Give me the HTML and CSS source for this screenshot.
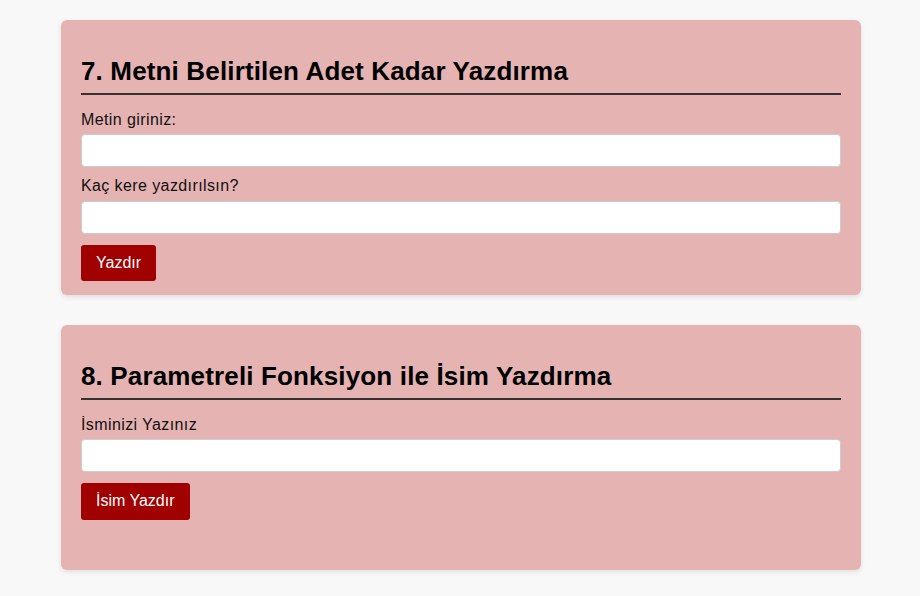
FILE: index.html
```html
<!DOCTYPE html>
<html lang="tr">
<head>
<meta charset="utf-8">
<title>JavaScript Alıştırmaları</title>
<link rel="stylesheet" href="styles.css">
</head>
<body>
<main class="page">
  <section class="card">
    <h2 class="card-title">7. Metni Belirtilen Adet Kadar Yazdırma</h2>
    <label class="field-label" for="metin">Metin giriniz:</label>
    <input class="field-input" id="metin" type="text">
    <label class="field-label" for="adet">Kaç kere yazdırılsın?</label>
    <input class="field-input" id="adet" type="text">
    <button class="btn" type="button">Yazdır</button>
  </section>
  <section class="card">
    <h2 class="card-title">8. Parametreli Fonksiyon ile İsim Yazdırma</h2>
    <label class="field-label" for="isim">İsminizi Yazınız</label>
    <input class="field-input" id="isim" type="text">
    <button class="btn" type="button">İsim Yazdır</button>
    <div class="output"></div>
  </section>
</main>
</body>
</html>
```

FILE: styles.css
```css
html, body {
  margin: 0;
  background: #f8f8f8;
  font-family: "Liberation Sans", Arial, sans-serif;
  color: #111;
}

body {
  padding-left: 2px;
}

.page {
  width: 800px;
  margin: 0 auto;
  padding: 20px 0;
  display: flex;
  flex-direction: column;
  gap: 30px;
}

.card {
  background: #e6b3b3;
  border-radius: 6px;
  box-shadow: 0 2px 5px rgba(0, 0, 0, 0.1);
  padding: 20px 20px 14px;
  display: flex;
  flex-direction: column;
  align-items: flex-start;
}

.card-title {
  align-self: stretch;
  margin: 17px 0 16px;
  padding-bottom: 6px;
  border-bottom: 2px solid #333;
  font-size: 26px;
  line-height: 1.15;
  letter-spacing: 0.15px;
  font-weight: bold;
  color: #000;
}

.field-label {
  font-size: 16px;
  line-height: 1.15;
  letter-spacing: 0.4px;
  margin-bottom: 5px;
}

.field-input {
  align-self: stretch;
  box-sizing: border-box;
  height: 33px;
  margin: 0 0 10px;
  border: 1px solid #ccc;
  border-radius: 4px;
  background: #fff;
  font-size: 16px;
  font-family: inherit;
}

.btn {
  margin-top: 1px;
  padding: 9px 15px;
  border: none;
  border-radius: 3px;
  background: #a00000;
  color: #fff;
  font-family: inherit;
  font-size: 16px;
  line-height: 1.15;
  cursor: pointer;
}

.output {
  height: 21px;
  margin-top: 15px;
}
```
